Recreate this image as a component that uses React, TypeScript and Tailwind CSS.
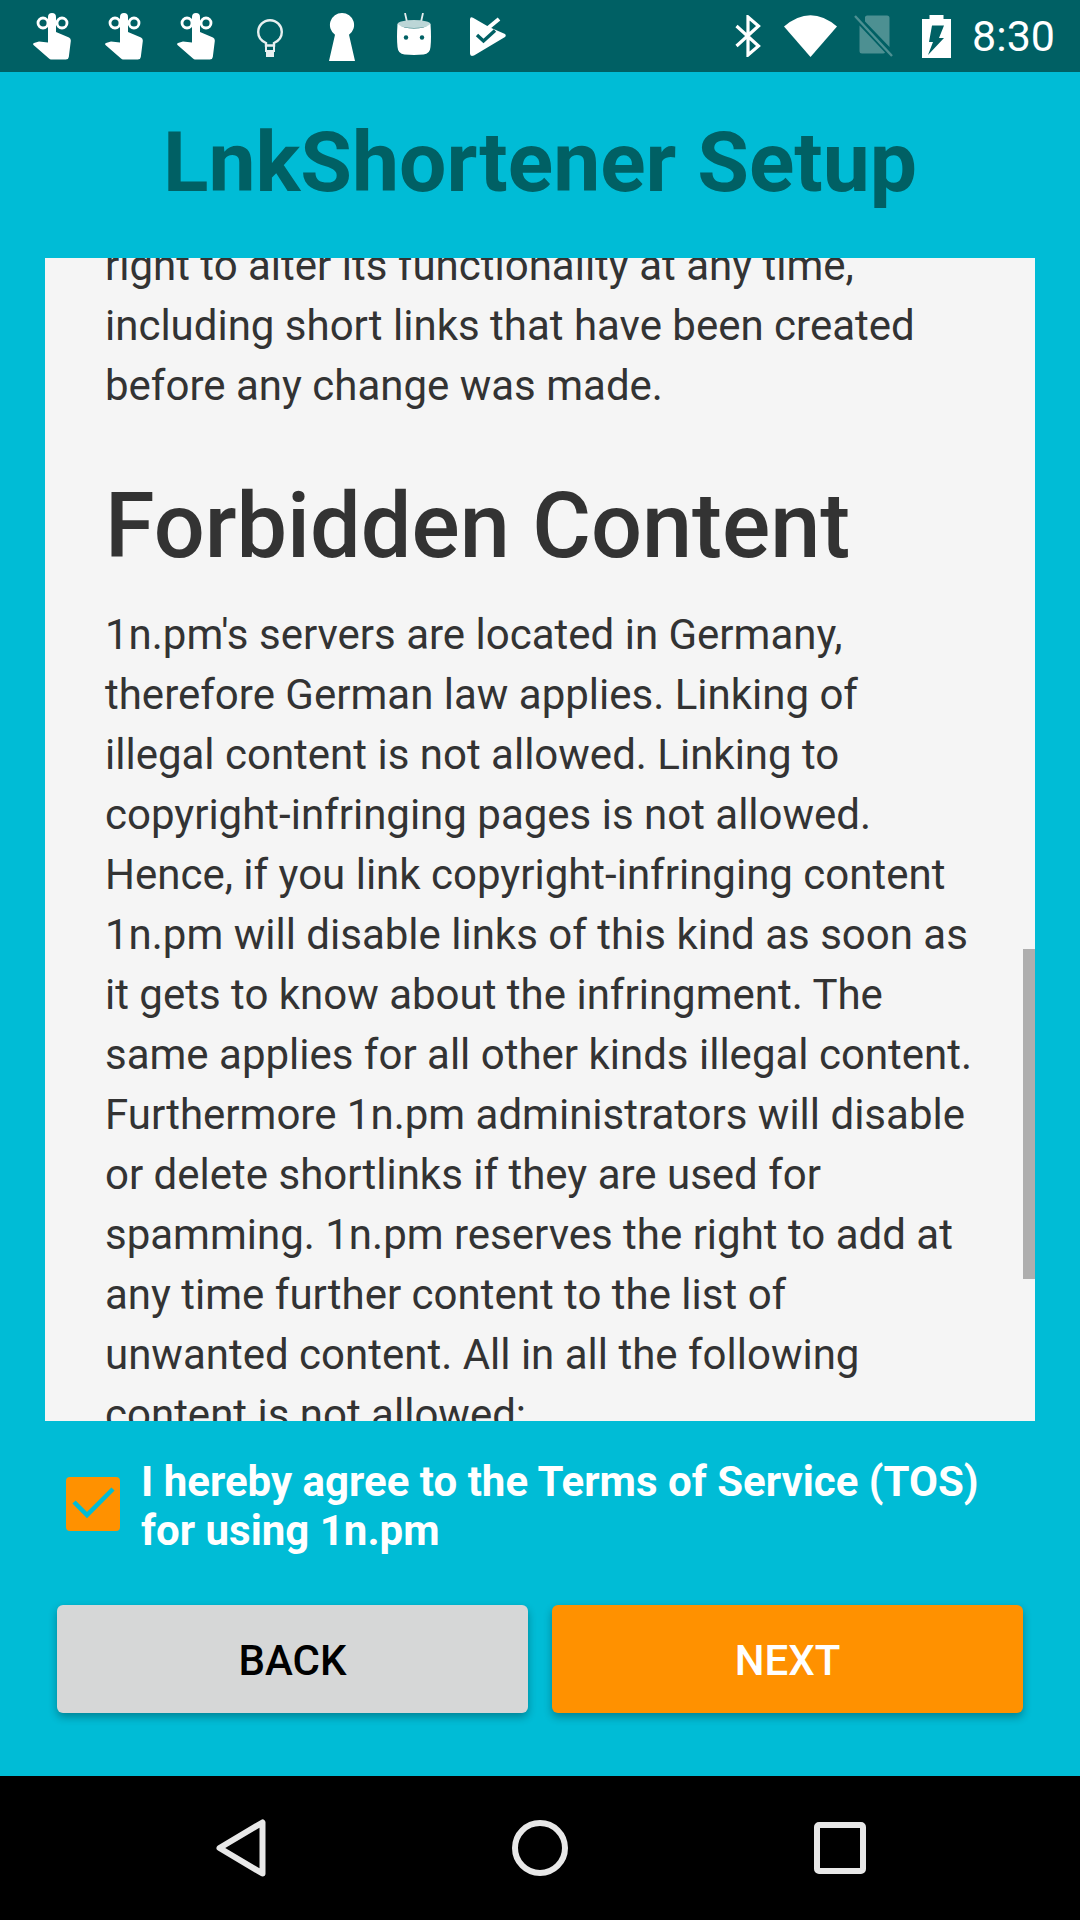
const font = "font-['Roboto',sans-serif]";

function Hand() {
  return (
    <svg width="39" height="48" viewBox="0 0 39 48" className="mt-[13px] mb-auto shrink-0">
      <circle cx="10" cy="10" r="5" fill="none" stroke="#fff" strokeWidth="2.800" />
      <circle cx="29" cy="10" r="5" fill="none" stroke="#fff" strokeWidth="2.800" />
      <path
        fill="#fff"
        d="M15 4a4 4 0 0 1 8 0v15l13 5.500q2 1 1.800 3.500l-2 16q-.3 2.500-3 2.500H18q-1 0-2-1L.5 32q-1-1.500.5-2l5-1.500 9 1z"
      />
    </svg>
  );
}

function Bulb() {
  return (
    <svg width="26" height="38" viewBox="0 0 26 38" className="mt-[19px] mb-auto shrink-0">
      <path
        fill="none"
        stroke="#e8f0f0"
        strokeWidth="2.400"
        d="M9 26.500v-2.500q-7.800-3.500-7.800-11A11.800 11.800 0 0 1 24.800 13q0 7.500-7.800 11v2.500z"
      />
      <path fill="none" stroke="#e8f0f0" strokeWidth="2" d="M9 27v5h8v-5" />
      <rect x="9" y="33" width="8" height="5" fill="#e8f0f0" />
    </svg>
  );
}

function Keyhole() {
  return (
    <svg width="26" height="48" viewBox="0 0 26 48" className="mt-[13px] mb-auto shrink-0">
      <path fill="#fff" d="M13 0a12 12 0 0 1 7 21.800L26 48H0l6-26.200A12 12 0 0 1 13 0z" />
    </svg>
  );
}

function Bot() {
  return (
    <svg width="34" height="42" viewBox="0 0 34 42" className="mt-[13px] mb-auto shrink-0">
      <path d="M8 0l2 9M26 0l-2 9" stroke="#e4eeee" strokeWidth="1.800" />
      <ellipse cx="17" cy="11" rx="16.500" ry="4" fill="#bcd6d7" />
      <path
        fill="#fff"
        d="M.5 11q6 4.500 16.500 4.500T33.500 11q1 14 0 23-.5 7-7 7.500-9.500.8-19 0-6.500-.5-7-7.500-1-9 0-23z"
      />
      <circle cx="9" cy="24.500" r="2.200" fill="#006064" />
      <circle cx="25" cy="24.500" r="2.200" fill="#006064" />
    </svg>
  );
}

function Tasks() {
  return (
    <svg width="36" height="40" viewBox="0 0 36 40" className="mt-[17px] mb-auto shrink-0">
      <path fill="#fff" d="M0 2.500Q0-.5 3 .7L19 10 35 17q1.500 1.500 0 3L4 38.500q-4 1.500-4-2z" />
      <path fill="none" stroke="#fff" strokeWidth="4" d="M12 16L29 2" />
      <path fill="none" stroke="#006064" strokeWidth="3.400" d="M7 18l6.500 6L25 13.500" />
    </svg>
  );
}

function Bluetooth() {
  return (
    <svg width="26" height="42" viewBox="0 0 26 42" className="shrink-0">
      <path fill="none" stroke="#fff" strokeWidth="3.200" d="M1.500 11l22 20-10.500 9V2l10.500 9-22 20" />
    </svg>
  );
}

function Wifi() {
  return (
    <svg width="53" height="42" viewBox="0 0 53 42" className="shrink-0">
      <path fill="#fff" d="M0 11.500Q26.500-11 53 11.500L26.500 42z" />
    </svg>
  );
}

function Sim() {
  return (
    <svg width="39" height="42" viewBox="0 0 39 42" className="shrink-0">
      <path
        fill="#fff"
        fillOpacity="0.3"
        d="M11 2q.5-1.500 2-1.500h20q2.500 0 2.500 2.500v29L11 6.500zM5.500 10.500L31 37.500q-.5 1-2 1H8q-2.500 0-2.500-2.500z"
      />
      <path d="M1 1l37 40" stroke="#fff" strokeOpacity="0.3" strokeWidth="2.400" fill="none" />
    </svg>
  );
}

function Battery() {
  return (
    <svg width="29" height="43" viewBox="0 0 29 43" className="shrink-0">
      <path fill="#fff" fillRule="evenodd" d="M7.500 0h14v4H29v39H0V4h7.500zM10 10.500h12L17 23h5L6 40l5-13H7z" />
    </svg>
  );
}

function StatusBar() {
  return (
    <div className="flex h-[72px] shrink-0 items-center bg-[#006064] pl-[33px] pr-[25px]">
      <div className="flex h-full items-start">
        <Hand />
        <div className="ml-[33px]"><Hand /></div>
        <div className="ml-[33px]"><Hand /></div>
        <div className="ml-[41px]"><Bulb /></div>
        <div className="ml-[46px]"><Keyhole /></div>
        <div className="ml-[42px]"><Bot /></div>
        <div className="ml-[39px]"><Tasks /></div>
      </div>
      <div className="ml-auto flex items-center">
        <Bluetooth />
        <div className="ml-[23px]"><Wifi /></div>
        <div className="ml-[17px]"><Sim /></div>
        <div className="ml-[29px]"><Battery /></div>
        <span className="ml-[21px] text-[43px] leading-none text-white">8:30</span>
      </div>
    </div>
  );
}

function TermsCard() {
  return (
    <div className="relative mx-[45px] h-[1163px] shrink-0 overflow-hidden bg-[#f5f5f5]">
      <div className="-mt-[22px] pl-[60px] pr-[62px] text-[42px] leading-[60px] text-[#333333]">
        <p>right to alter its functionality at any time, including short links that have been created before any change was made.</p>
        <h2 className="mt-[62px] mb-[29px] text-[90px] font-medium leading-[98px]">Forbidden Content</h2>
        <p>
          1n.pm's servers are located in Germany, therefore German law applies. Linking of illegal content is not
          allowed. Linking to copyright-infringing pages is not allowed. Hence, if you link copyright-infringing
          content 1n.pm will disable links of this kind as soon as it gets to know about the infringment. The same
          applies for all other kinds illegal content. Furthermore 1n.pm administrators will disable or delete
          shortlinks if they are used for spamming. 1n.pm reserves the right to add at any time further content to the
          list of unwanted content. All in all the following content is not allowed:
        </p>
      </div>
      {/* scrollbar thumb */}
      <div className="absolute right-0 top-[691px] h-[330px] w-[12px] bg-[#aeaeae]" />
    </div>
  );
}

function AgreeRow() {
  return (
    <div className="mt-[33px] flex items-start pl-[66px]">
      <div className="mt-[23px] h-[54px] w-[54px] rounded-[4px] bg-[#ff9100]">
        <svg width="54" height="54" viewBox="0 0 54 54">
          <path d="M8 25l13 13L47 12" fill="none" stroke="#00bcd6" strokeWidth="4.500" />
        </svg>
      </div>
      <p className="ml-[21px] mt-[3px] mb-[1px] w-[880px] text-[42px] font-bold leading-[49px] text-white">
        I hereby agree to the Terms of Service (TOS) for using 1n.pm
      </p>
    </div>
  );
}

function Buttons() {
  return (
    <div className="mt-[49px] flex gap-[24px] pl-[57px] pr-[57px]">
      <button className="h-[108px] flex-1 rounded-[6px] bg-[#d6d7d7] pt-[3px] text-[42px] font-medium text-black shadow-[0_4px_8px_rgba(0,0,0,0.3)]">
        BACK
      </button>
      <button className="h-[108px] flex-1 rounded-[6px] bg-[#ff9100] pt-[3px] text-[42px] font-medium text-white shadow-[0_4px_8px_rgba(0,0,0,0.3)]">
        NEXT
      </button>
    </div>
  );
}

function NavBar() {
  return (
    <div className="flex h-[144px] shrink-0 items-center justify-center bg-black pl-[2px]">
      <svg width="50" height="58" viewBox="0 0 50 58">
        <path d="M46.500 3.500v51L3.500 29z" fill="none" stroke="#e8e8e8" strokeWidth="6" strokeLinejoin="round" />
      </svg>
      <svg width="56" height="56" viewBox="0 0 56 56" className="ml-[246px]">
        <circle cx="28" cy="28" r="25" fill="none" stroke="#e8e8e8" strokeWidth="6" />
      </svg>
      <svg width="52" height="52" viewBox="0 0 52 52" className="ml-[246px]">
        <rect x="3" y="3" width="46" height="46" rx="2" fill="none" stroke="#e8e8e8" strokeWidth="6" />
      </svg>
    </div>
  );
}

export default function App() {
  return (
    <div className={`flex h-[1920px] w-[1080px] flex-col overflow-hidden bg-[#00bcd6] ${font}`}>
      <StatusBar />
      <h1 className="flex h-[186px] shrink-0 items-center justify-center pb-[4px] text-[84px] font-bold leading-none text-[#006064]">
        LnkShortener Setup
      </h1>
      <TermsCard />
      <AgreeRow />
      <Buttons />
      <div className="flex-1" />
      <NavBar />
    </div>
  );
}
